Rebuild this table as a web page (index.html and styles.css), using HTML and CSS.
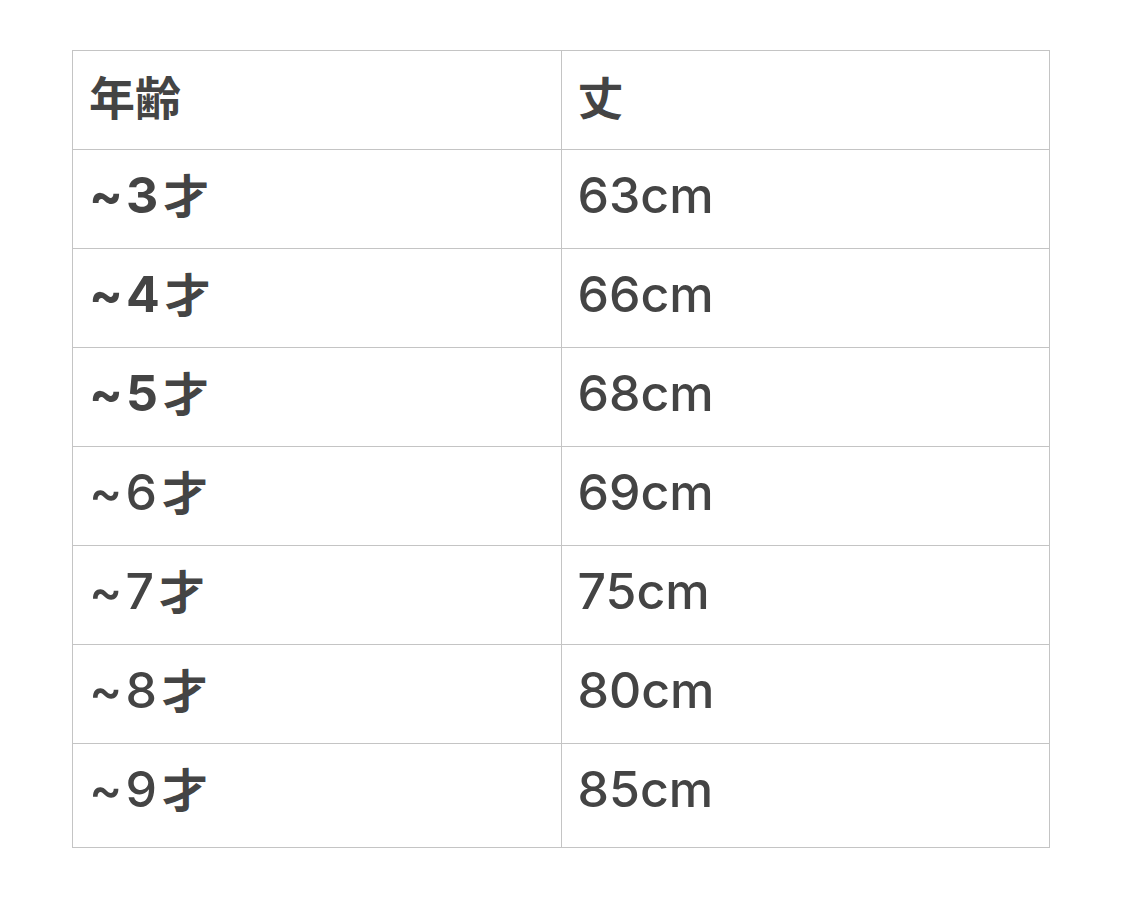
FILE: index.html
```html
<!DOCTYPE html>
<html lang="ja">
<head>
<meta charset="utf-8">
<link rel="stylesheet" href="styles.css">
</head>
<body>
<table class="size-table">
  <thead>
    <tr><th class="cell head">年齢</th><th class="cell head">丈</th></tr>
  </thead>
  <tbody>
    <tr><td class="cell bold"><span class="tilde">~</span>3<b class="kanji">才</b></td><td class="cell">63cm</td></tr>
    <tr><td class="cell bold"><span class="tilde">~</span>4<b class="kanji">才</b></td><td class="cell">66cm</td></tr>
    <tr><td class="cell bold"><span class="tilde">~</span>5<b class="kanji">才</b></td><td class="cell">68cm</td></tr>
    <tr><td class="cell"><span class="tilde">~</span>6<b class="kanji">才</b></td><td class="cell">69cm</td></tr>
    <tr><td class="cell"><span class="tilde">~</span>7<b class="kanji">才</b></td><td class="cell">75cm</td></tr>
    <tr><td class="cell"><span class="tilde">~</span>8<b class="kanji">才</b></td><td class="cell">80cm</td></tr>
    <tr class="last"><td class="cell"><span class="tilde">~</span>9<b class="kanji">才</b></td><td class="cell">85cm</td></tr>
  </tbody>
</table>
</body>
</html>
```

FILE: styles.css
```css
html, body {
  margin: 0;
  padding: 0;
  background: #fff;
}
body {
  padding: 50px 0 0 72px;
  font-family: Inter, "Noto Sans CJK JP", sans-serif;
  color: #444;
}
.size-table {
  border-collapse: collapse;
  width: 978px;
  table-layout: fixed;
}
.cell {
  border: 1px solid #c4c4c4;
  height: 99px;
  padding: 0 0 8px 16px;
  text-align: left;
  vertical-align: middle;
  font-size: 50px;
  font-weight: 500;
  box-sizing: border-box;
  line-height: 1;
}
.head {
  font-family: "Noto Sans CJK JP", sans-serif;
  font-weight: 700;
  font-size: 46px;
  padding-bottom: 10px;
}
.bold {
  font-weight: 700;
}
.tilde {
  margin-right: 3px;
}
.kanji {
  font-family: "Noto Sans CJK JP", sans-serif;
  font-weight: 700;
  font-size: 46px;
  margin-left: 5px;
}
.last .cell {
  height: 104px;
  padding-bottom: 14px;
}
```
